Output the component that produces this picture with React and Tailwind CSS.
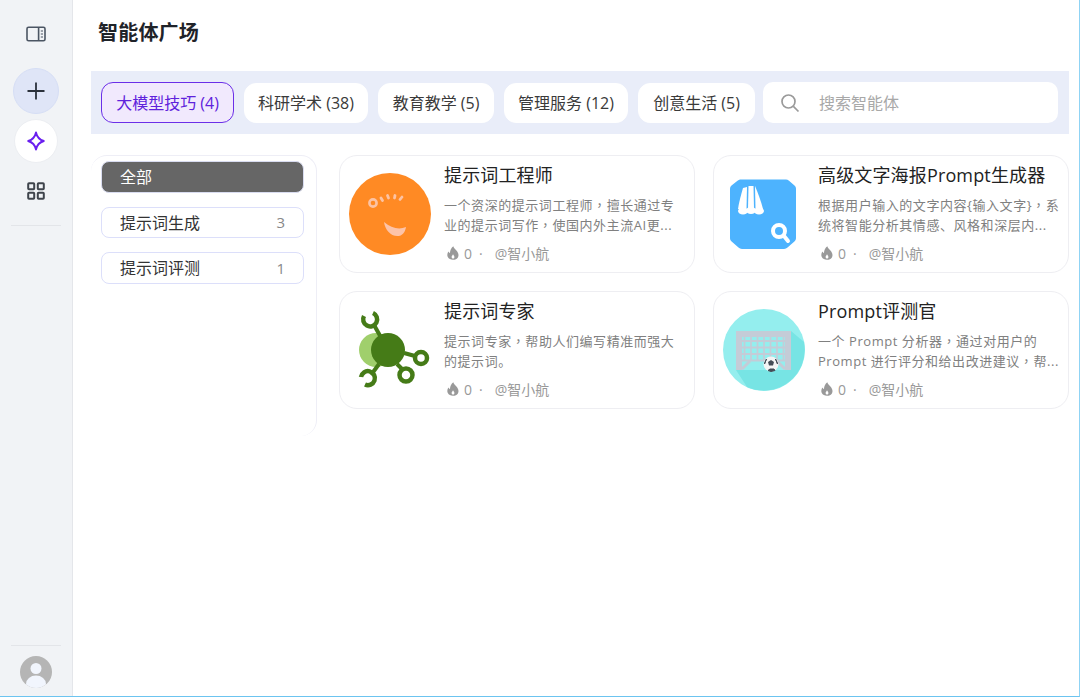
import React from "react";

const FONT = "font-['Open_Sans','Noto_Sans_CJK_SC',sans-serif]";

function Fire() {
  return (
    <svg width="12" height="14" viewBox="0 0 12 14" className="shrink-0">
      <path d="M6.3 0.3C6.8 2.6 9 3.6 10.4 5.7C11.6 7.5 11.9 9.6 10.9 11.4C10 13 8.2 13.8 6 13.8C3.6 13.8 1.7 12.8 0.8 11C-0.1 9.2 0.3 7.2 1.5 5.6C1.9 6.4 2.3 6.9 3 7.2C2.9 4.6 4.2 1.9 6.3 0.3Z" fill="#999999" />
      <path d="M6 8.3C6.2 9.1 7.4 9.6 7.4 11C7.4 12 6.8 12.6 6 12.6C5.2 12.6 4.6 12 4.6 11.1C4.6 10 5.6 9.5 6 8.3Z" fill="#ffffff" />
    </svg>
  );
}

function Orange() {
  return (
    <svg width="82" height="82" viewBox="0 0 82 82" className="-ml-px">
      <circle cx="41" cy="41" r="41" fill="#ff8a24" />
      <circle cx="24" cy="30" r="3.6" fill="none" stroke="#fcc3a4" strokeWidth="2.6" />
      <g stroke="#fcc3a4" strokeWidth="2.8" strokeLinecap="round">
        <path d="M32 25L33.5 27.5" />
        <path d="M38.5 22.5L39.5 25" />
        <path d="M46 22.5L45.5 25" />
        <path d="M53 24L51 26.5" />
      </g>
      <path d="M35 49C36 57 42 64 50 63C55 62 56.5 57 57 54C50 57 42 55 35 49Z" fill="#fdc3a8" />
    </svg>
  );
}

function Blue() {
  return (
    <svg width="68" height="70" viewBox="0 0 68 70">
      <path d="M11 0.5H56C57 0.5 58 1 59 1.8L64.5 6.5C65.5 7.4 66 8.5 66 10V59C66 60.5 65.4 61.6 64.4 62.6L57.5 68.6C56.5 69.5 55.5 70 54 70H12C10.5 70 9.5 69.5 8.5 68.6L1.6 62.6C0.6 61.6 0 60.5 0 59V10C0 8.5 0.5 7.4 1.5 6.5L7.5 1.8C8.5 1 10 0.5 11 0.5Z" fill="#4db3fe" />
      <g fill="#ffffff">
        <path d="M13 9C11 16 9 23 8 30H16.5L17 8Z" />
        <path d="M18.5 7H23.5L24 30H18Z" />
        <path d="M25 7C28 14 31 22 33 30H25.5Z" />
        <ellipse cx="13" cy="32" rx="5" ry="3.5" />
        <ellipse cx="21" cy="31.5" rx="5" ry="3.5" />
        <ellipse cx="29" cy="32" rx="5" ry="3.5" />
      </g>
      <circle cx="49" cy="52" r="6" fill="none" stroke="#ffffff" strokeWidth="4" />
      <path d="M54 57L58 62" stroke="#ffffff" strokeWidth="4" strokeLinecap="round" />
    </svg>
  );
}

function Green() {
  return (
    <svg width="82" height="82" viewBox="0 0 82 82">
      <circle cx="27" cy="41" r="17" fill="#a0cf6c" />
      <g stroke="#457b17" strokeWidth="4" fill="none">
        <path d="M39 41L25 16" />
        <path d="M30 55L22 66" />
        <path d="M55 44L66 47" />
        <path d="M48 55L53 60" />
        <circle cx="72" cy="49" r="6" strokeWidth="4.5" />
        <circle cx="57" cy="66" r="6.5" strokeWidth="4.5" />
        <path d="M15 7A7 7 0 1 0 24 4" strokeWidth="4.5" />
        <path d="M12 68A7 7 0 1 1 16 75.5" strokeWidth="4.5" />
      </g>
      <circle cx="39" cy="41" r="17" fill="#457b17" />
    </svg>
  );
}

function Goal() {
  const lines = [];
  for (let i = 0; i < 7; i++) lines.push(<path key={"v" + i} d={`M${21.5 + i * 6.5} 28V52`} stroke="#c4ccd7" strokeWidth="1.8" />);
  for (let i = 0; i < 4; i++) lines.push(<path key={"h" + i} d={`M19 ${32 + i * 6.5}H62`} stroke="#c4ccd7" strokeWidth="1.8" />);
  return (
    <svg width="82" height="82" viewBox="0 0 82 82">
      <circle cx="41" cy="41" r="41" fill="#94eeee" />
      <path d="M68 22L81 33A41 41 0 0 1 24 78L13 61H68Z" fill="#77e4e4" />
      <path d="M13 61V22H68V61H62V28H19V61Z" fill="#c4ccd7" />
      {lines}
      <path d="M19 60L27 52M62 60L54 52" fill="none" stroke="#c4ccd7" strokeWidth="3" />
      <circle cx="48" cy="55" r="7.5" fill="#f4f4f4" />
      <path d="M48 51L51 53L50 56.5H46L45 53Z" fill="#444c56" />
      <path d="M42 53L43.5 50L41.5 55ZM54 53L52.5 50L54.5 55ZM45 61.5L47 60L51 60L52 61.5L48 62.5Z" fill="#444c56" stroke="#444c56" />
    </svg>
  );
}

function Line({ text }) {
  const parts = text.split("，");
  return (
    <div className="whitespace-nowrap">
      {parts.map((p, i) => (
        <React.Fragment key={i}>
          {i > 0 ? <span className="font-['Noto_Sans_CJK_TC',sans-serif]">，</span> : null}
          {p}
        </React.Fragment>
      ))}
    </div>
  );
}

function Card({ icon, title, lines }) {
  return (
    <div className="flex h-[118px] gap-3 rounded-[18px] border border-[#eeeef2] bg-white pl-2 pr-[9px]">
      <div className="flex w-[84px] shrink-0 items-center justify-center">{icon}</div>
      <div className="flex min-w-0 flex-1 flex-col pt-[6px]">
        <div className="text-[18px] leading-[26px] tracking-[0.15px] text-[#222222]">{title}</div>
        <div className="mt-[7px] h-[40px] text-[13px] leading-[20px] tracking-[0.55px] text-[#808080]">
          {lines.map((l) => <Line key={l} text={l} />)}
        </div>
        <div className="mt-[7px] flex h-[22px] items-center text-[14px] text-[#999999]">
          <span className="ml-[3px]"><Fire /></span>
          <span className="ml-[5px]">0</span>
          <span className="ml-[7px]">·</span>
          <span className="ml-[12px]">@智小航</span>
        </div>
      </div>
    </div>
  );
}

function Tab({ children, active, w }) {
  return (
    <div className={`flex shrink-0 items-center justify-center rounded-[12px] border text-[16px] ${w} ${active ? "h-[41px] border-[#6b2fe8] bg-[#f1e9fd] text-[#5f22dc]" : "h-[40px] border-white bg-white text-[#3a3a3a]"}`}>
      {children}
    </div>
  );
}

function Row({ label, count, active, cls }) {
  return (
    <div className={`flex items-center justify-between rounded-[8px] border pl-[18px] pr-[18px] text-[16px] ${cls} ${active ? "border-[#d9dcf0] bg-[#666666] text-white" : "border-[#dcdffa] bg-white text-[#333333]"}`}>
      <span>{label}</span>
      {count ? <span className="text-[15px] text-[#888888]">{count}</span> : null}
    </div>
  );
}

export default function App() {
  return (
    <div className={`flex h-[697px] w-[1080px] overflow-hidden border-b border-r border-b-[#6cc4f0] border-r-[#8fd3f4] bg-white ${FONT}`}>
      <aside className="flex w-[73px] shrink-0 flex-col items-center border-r border-[#e4e6ea] bg-[#f1f3f6] pb-[8px]">
        <div className="mt-[23px] flex h-[22px] items-center justify-center">
          <svg width="20" height="16" viewBox="0 0 20 16" fill="none" stroke="#4b5563" strokeWidth="1.6">
            <rect x="1" y="1.2" width="18" height="13.6" rx="1.6" />
            <path d="M12.6 1.2V14.8" />
            <path d="M14.8 5H17M14.8 8H17M14.8 11H17" strokeWidth="1.1" />
          </svg>
        </div>
        <div className="mt-[23px] flex h-[46px] w-[46px] items-center justify-center rounded-full border border-[#d6def5] bg-[#dfe5f7]">
          <svg width="18" height="18" viewBox="0 0 18 18" stroke="#2b313b" strokeWidth="1.8">
            <path d="M9 0.5V17.5M0.5 9H17.5" />
          </svg>
        </div>
        <div className="mt-[5px] flex h-[44px] w-[44px] items-center justify-center rounded-full border border-[#eceef2] bg-white">
          <svg width="18" height="20" viewBox="0 0 18 20" fill="none" stroke="#6a1fef" strokeWidth="1.9" strokeLinejoin="round">
            <path d="M9 1.5C10 6.2 12 8.6 16.8 10C12 11.4 10 13.8 9 18.5C8 13.8 6 11.4 1.2 10C6 8.6 8 6.2 9 1.5Z" />
          </svg>
        </div>
        <div className="mt-[15px] flex h-[26px] items-center justify-center">
          <svg width="18" height="18" viewBox="0 0 18 18" fill="none" stroke="#3f444c" strokeWidth="2">
            <rect x="1.2" y="1.2" width="6" height="6" rx="0.8" />
            <rect x="10.8" y="1.2" width="6" height="6" rx="0.8" />
            <rect x="1.2" y="10.8" width="6" height="6" rx="0.8" />
            <rect x="10.8" y="10.8" width="6" height="6" rx="0.8" />
          </svg>
        </div>
        <div className="mt-[21px] h-px w-[50px] bg-[#e3e5e9]" />
        <div className="mt-auto h-px w-[50px] bg-[#e3e5e9]" />
        <div className="mt-[10px] h-[32px] w-[32px]">
          <svg width="32" height="32" viewBox="0 0 32 32">
            <defs>
              <clipPath id="avatar-clip"><circle cx="16" cy="16" r="16" /></clipPath>
            </defs>
            <circle cx="16" cy="16" r="16" fill="#b5b5b5" />
            <g clipPath="url(#avatar-clip)">
              <circle cx="16" cy="12.5" r="5.5" fill="#f1f5fd" />
              <ellipse cx="16" cy="28" rx="10" ry="8.5" fill="#f1f5fd" />
            </g>
          </svg>
        </div>
      </aside>

      <main className="min-w-0 flex-1 pl-[18px] pr-[10px]">
        <h1 className="pl-[7px] pt-[18px] text-[20px] font-bold leading-[29px] tracking-[0.2px] text-[#1f2329]">智能体广场</h1>
        <div className="mt-[24px] flex h-[63px] items-center gap-[10px] bg-[#e9edf9] px-[10px]">
          <Tab active w="w-[133px]">大模型技巧 (4)</Tab>
          <Tab w="w-[124px]">科研学术 (38)</Tab>
          <Tab w="w-[116px]">教育教学 (5)</Tab>
          <Tab w="w-[124px]">管理服务 (12)</Tab>
          <Tab w="w-[117px]">创意生活 (5)</Tab>
          <div className="ml-[-2px] mr-px flex h-[41px] flex-1 items-center rounded-[10px] bg-white pl-[17px] text-[16px] text-[#a8a8a8]">
            <svg width="20" height="20" viewBox="0 0 20 20" fill="none" stroke="#9a9a9a" strokeWidth="1.7">
              <circle cx="8.5" cy="8.5" r="6.5" />
              <path d="M13.4 13.4L18.5 18.5" />
            </svg>
            <span className="ml-[19px]">搜索智能体</span>
          </div>
        </div>
        <div className="mt-[21px] flex gap-[22px]">
          <div className="flex h-[281px] w-[226px] shrink-0 flex-col gap-[14px] rounded-[16px] border-r border-t border-[#eeeef6] bg-white py-[5px] pl-[10px] pr-[12px]">
            <Row label="全部" active cls="h-[32px]" />
            <Row label="提示词生成" count="3" cls="h-[31px]" />
            <Row label="提示词评测" count="1" cls="h-[32px]" />
          </div>
          <div className="grid flex-1 grid-cols-2 content-start gap-x-[18px] gap-y-[18px]">
            <Card icon={<Orange />} title="提示词工程师" lines={["一个资深的提示词工程师，擅长通过专", "业的提示词写作，使国内外主流AI更..."]} />
            <Card icon={<Blue />} title="高级文字海报Prompt生成器" lines={["根据用户输入的文字内容{输入文字}，系", "统将智能分析其情感、风格和深层内..."]} />
            <Card icon={<Green />} title="提示词专家" lines={["提示词专家，帮助人们编写精准而强大", "的提示词。"]} />
            <Card icon={<Goal />} title="Prompt评测官" lines={["一个 Prompt 分析器，通过对用户的", "Prompt 进行评分和给出改进建议，帮..."]} />
          </div>
        </div>
      </main>
    </div>
  );
}
